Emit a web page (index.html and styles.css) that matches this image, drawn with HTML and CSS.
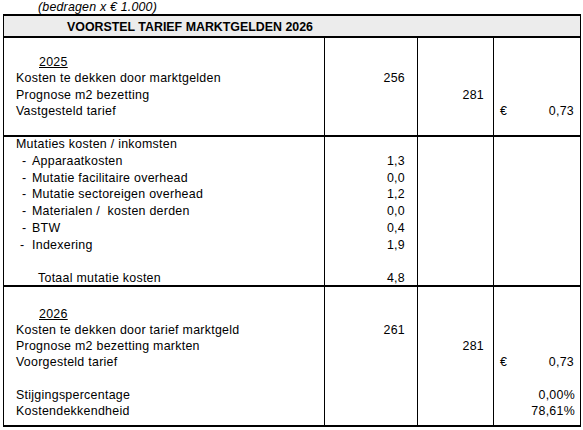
FILE: index.html
```html
<!DOCTYPE html>
<html>
  <head>
    <title>Voorstel tarief marktgelden 2026</title>
    <link rel="stylesheet" href="styles.css">
  </head>
  <body>
    <p class="note">(bedragen x € 1.000)</p>

    <table class="tariff">
      <colgroup>
        <col class="col-label" />
        <col class="col-amount" />
        <col class="col-m2" />
        <col class="col-rate" />
      </colgroup>
      <thead>
        <tr>
          <th colspan="4">VOORSTEL TARIEF MARKTGELDEN 2026</th>
        </tr>
      </thead>

      <tbody class="sec sec-current">
        <tr>
          <td class="label">
            <div class="cell">
              <div class="ln">&nbsp;</div>
              <div class="ln year">2025</div>
              <div class="ln">Kosten te dekken door marktgelden</div>
              <div class="ln">Prognose m2 bezetting</div>
              <div class="ln">Vastgesteld tarief</div>
            </div>
          </td>
          <td class="num">
            <div class="cell">
              <div class="ln">&nbsp;</div>
              <div class="ln">&nbsp;</div>
              <div class="ln">256</div>
            </div>
          </td>
          <td class="num num-m2">
            <div class="cell">
              <div class="ln">&nbsp;</div>
              <div class="ln">&nbsp;</div>
              <div class="ln">&nbsp;</div>
              <div class="ln">281</div>
            </div>
          </td>
          <td class="rate">
            <div class="cell">
              <div class="ln">&nbsp;</div>
              <div class="ln">&nbsp;</div>
              <div class="ln">&nbsp;</div>
              <div class="ln">&nbsp;</div>
              <div class="ln euro"><span>€</span><span>0,73</span></div>
            </div>
          </td>
        </tr>
      </tbody>

      <tbody class="sec sec-mutations">
        <tr>
          <td class="label">
            <div class="cell">
              <div class="ln">Mutaties kosten / inkomsten</div>
              <div class="ln item"><span class="dash">-</span>Apparaatkosten</div>
              <div class="ln item"><span class="dash">-</span>Mutatie facilitaire overhead</div>
              <div class="ln item"><span class="dash">-</span>Mutatie sectoreigen overhead</div>
              <div class="ln item"><span class="dash">-</span>Materialen /&nbsp; kosten derden</div>
              <div class="ln item"><span class="dash">-</span>BTW</div>
              <div class="ln item"><span class="dash dash-left">-</span>Indexering</div>
              <div class="ln">&nbsp;</div>
              <div class="ln total">Totaal mutatie kosten</div>
            </div>
          </td>
          <td class="num">
            <div class="cell">
              <div class="ln">&nbsp;</div>
              <div class="ln">1,3</div>
              <div class="ln">0,0</div>
              <div class="ln">1,2</div>
              <div class="ln">0,0</div>
              <div class="ln">0,4</div>
              <div class="ln">1,9</div>
              <div class="ln">&nbsp;</div>
              <div class="ln">4,8</div>
            </div>
          </td>
          <td class="num num-m2"><div class="cell"></div></td>
          <td class="rate"><div class="cell"></div></td>
        </tr>
      </tbody>

      <tbody class="sec sec-next">
        <tr>
          <td class="label">
            <div class="cell">
              <div class="ln">&nbsp;</div>
              <div class="ln year">2026</div>
              <div class="ln">Kosten te dekken door tarief marktgeld</div>
              <div class="ln">Prognose m2 bezetting markten</div>
              <div class="ln">Voorgesteld tarief</div>
              <div class="ln">&nbsp;</div>
              <div class="ln">Stijgingspercentage</div>
              <div class="ln">Kostendekkendheid</div>
            </div>
          </td>
          <td class="num">
            <div class="cell">
              <div class="ln">&nbsp;</div>
              <div class="ln">&nbsp;</div>
              <div class="ln">261</div>
            </div>
          </td>
          <td class="num num-m2">
            <div class="cell">
              <div class="ln">&nbsp;</div>
              <div class="ln">&nbsp;</div>
              <div class="ln">&nbsp;</div>
              <div class="ln">281</div>
            </div>
          </td>
          <td class="rate">
            <div class="cell">
              <div class="ln">&nbsp;</div>
              <div class="ln">&nbsp;</div>
              <div class="ln">&nbsp;</div>
              <div class="ln">&nbsp;</div>
              <div class="ln euro"><span>€</span><span>0,73</span></div>
              <div class="ln">&nbsp;</div>
              <div class="ln pct">0,00%</div>
              <div class="ln pct">78,61%</div>
            </div>
          </td>
        </tr>
      </tbody>
    </table>
  </body>
</html>
```

FILE: styles.css
```css
body {
  font-family: "Liberation Sans", Arial, sans-serif;
  font-size: 12.4px;
  color: #000;
  background-color: #fff;
  margin: 0;
}
.note {
  margin: 0 0 0 38px;
  height: 14px;
  line-height: 14px;
  font-style: italic;
  letter-spacing: 0.2px;
}
.tariff {
  margin-left: 3px;
  width: 577px;
  border-collapse: collapse;
  table-layout: fixed;
}
.col-label {
  width: 321px;
}
.col-amount {
  width: 93px;
}
.col-m2 {
  width: 76px;
}
.col-rate {
  width: 87px;
}
th {
  height: 19px;
  padding: 1px 0 0 63px;
  text-align: left;
  font-weight: bold;
  background-color: #ececec;
  border: 2px solid #000;
  border-left-width: 1px;
  border-right-width: 1px;
}
td {
  vertical-align: top;
  padding: 0;
  letter-spacing: 0.28px;
  border-left: 1px solid #000;
  border-right: 1px solid #000;
  border-bottom: 2px solid #000;
}
.cell {
  overflow: visible;
}
.sec-current .cell {
  height: 97px;
}
.sec-current .ln {
  height: 16.2px;
  line-height: 16.2px;
}
.sec-mutations .cell {
  height: 148px;
}
.sec-mutations .ln {
  height: 16.8px;
  line-height: 15px;
}
.sec-next .cell {
  height: 138px;
  padding-top: 3px;
  box-sizing: border-box;
}
.sec-next .ln {
  height: 16.1px;
  line-height: 16.1px;
}
.label {
  padding-left: 12px;
}
.year {
  padding-left: 23px;
  text-decoration: underline;
}
.item {
  display: flex;
}
.dash {
  width: 16px;
  padding-left: 6px;
  box-sizing: border-box;
}
.dash-left {
  padding-left: 4px;
}
.total {
  padding-left: 22px;
}
.num {
  text-align: right;
  padding-right: 12px;
}
.num-m2 {
  padding-right: 9px;
}
.rate {
  padding: 0 5px;
}
.euro {
  display: flex;
  justify-content: space-between;
  padding-left: 1px;
  padding-right: 1px;
}
.pct {
  text-align: right;
}
```
